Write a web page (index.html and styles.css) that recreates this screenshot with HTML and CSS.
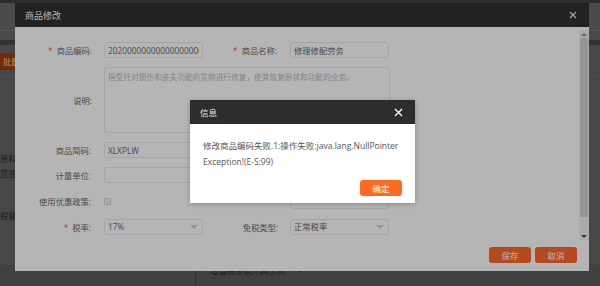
FILE: index.html
```html
<!DOCTYPE html>
<html lang="zh-CN">
<head>
    <meta charset="UTF-8">
    <meta name="viewport" content="width=device-width, initial-scale=1.0">
    <title>商品修改</title>
    <link rel="stylesheet" href="styles.css">
</head>
<body>
    <!-- page behind the layers -->
    <div class="page">
        <div class="page-top"></div>
        <div class="page-nav"></div>
        <div class="page-subnav"></div>
        <div class="page-band"></div>
        <div class="page-toolbar">
            <span class="page-btn">证书 批量导入</span>
        </div>
        <div class="page-body">
            <div class="page-label first"><span>生产原料：</span></div>
            <div class="page-label"><span>经营范围：</span></div>
            <div class="page-label third"><span>凭证税额：</span></div>
            <div class="page-row">
                <div class="page-cell"></div>
                <div class="page-cell text">增值税发票开具示例</div>
                <div class="page-cell mark">-</div>
            </div>
        </div>
    </div>

    <div class="modal">
        <div class="modal-head">
            <span class="modal-title">商品修改</span>
            <svg class="modal-close" width="8" height="8" viewBox="0 0 8 8">
                <path d="M1 1L7 7M7 1L1 7" stroke="#e6e6e6" stroke-width="1.3"/>
            </svg>
        </div>
        <div class="modal-main">
            <form class="goods-form">
                <label class="lbl"><i>*</i>商品编码:</label>
                <input class="field" type="text" value="20200000000000000000">
                <label class="lbl"><i>*</i>商品名称:</label>
                <input class="field" type="text" value="修理修配劳务">

                <label class="lbl">说明:</label>
                <textarea class="field area" placeholder="指受托对损伤和丧失功能的货物进行修复，使其恢复原状和功能的业务。"></textarea>

                <label class="lbl">商品简码:</label>
                <input class="field" type="text" value="XLXPLW">
                <label class="lbl">规格型号:</label>
                <input class="field" type="text">

                <label class="lbl">计量单位:</label>
                <input class="field" type="text">
                <label class="lbl">单价:</label>
                <input class="field" type="text">

                <label class="lbl">使用优惠政策:</label>
                <span class="check"></span>
                <label class="lbl"></label>
                <input class="field" type="text">

                <label class="lbl"><i>*</i>税率:</label>
                <div class="field select">17%</div>
                <label class="lbl">免税类型:</label>
                <div class="field select">正常税率</div>
            </form>
            <div class="scrollbar">
                <div class="arrow up"></div>
                <div class="thumb"></div>
                <div class="track-rest"></div>
                <div class="arrow down"></div>
            </div>
        </div>
        <div class="modal-foot">
            <button class="btn">保存</button>
            <button class="btn">取消</button>
        </div>
    </div>

    <div class="shade"></div>

    <div class="dialog">
        <div class="dialog-head">
            <span class="dialog-title">信息</span>
            <svg class="dialog-close" width="9" height="9" viewBox="0 0 9 9">
                <path d="M1 1L8 8M8 1L1 8" stroke="#ffffff" stroke-width="1.3"/>
            </svg>
        </div>
        <div class="dialog-body">修改商品编码失败.1:操作失败:java.lang.NullPointer<br>Exception!(E-S:99)</div>
        <div class="dialog-foot">
            <button class="dialog-btn">确定</button>
        </div>
    </div>
</body>
</html>
```

FILE: styles.css
```css
body {
    margin: 0;
    width: 600px;
    height: 286px;
    overflow: hidden;
    position: relative;
    font-family: "Open Sans", "Noto Sans CJK SC", sans-serif;
    font-size: 8.3px;
    background-color: #646464;
}

/* page behind */
.page-top {
    height: 3px;
    background: #3e3e3e;
}
.page-nav {
    height: 27px;
    background: #6a6a6a;
    border-bottom: 1px solid #787878;
}
.page-subnav {
    height: 9px;
    background: #676767;
}
.page-band {
    height: 5px;
    background: #484848;
}
.page-toolbar {
    height: 31px;
    background: #646464;
    border-bottom: 1px solid #717171;
    padding-top: 8px;
    box-sizing: border-box;
    display: flex;
}
.page-btn {
    height: 17px;
    line-height: 17px;
    margin-left: -16px;
    padding: 0 8px 0 0;
    background: #a23c08;
    color: #f3c7a8;
    white-space: nowrap;
}
.page-body {
    background: #646464;
}
.page-label {
    width: 25px;
    height: 15px;
    line-height: 15px;
    display: flex;
    justify-content: flex-end;
    white-space: nowrap;
    color: #2a2a2a;
}
.page-label.first {
    margin-top: 75px;
}
.page-label.third {
    margin-top: 27px;
}
.page-row {
    margin-top: 42px;
    height: 22px;
    display: flex;
    background: #5c5c5c;
}
.page-cell {
    line-height: 12px;
    color: #2a2a2a;
    white-space: nowrap;
}
.page-cell:first-child {
    width: 195px;
    border-right: 1px solid #484848;
}
.page-cell.text {
    padding-left: 14px;
}
.page-cell.mark {
    padding-left: 14px;
}

/* edit window */
.modal {
    position: absolute;
    left: 15px;
    top: 3px;
    width: 574px;
    height: 268px;
    background: #fff;
    display: flex;
    flex-direction: column;
}
.modal-head {
    height: 24px;
    background: #303030;
    display: flex;
    align-items: center;
    justify-content: space-between;
    padding: 0 12px 0 10px;
}
.modal-title {
    color: #fff;
    font-size: 9px;
}
.modal-main {
    height: 213px;
    display: flex;
}
.goods-form {
    flex: 1;
    display: grid;
    grid-template-columns: 89px 99px 87px 99px;
    grid-template-rows: 16px 66px 16px 16px 18px 16px;
    row-gap: 9px;
    align-items: center;
    align-content: start;
    padding-top: 15px;
    margin: 0;
}
.lbl {
    text-align: right;
    padding-right: 12px;
    color: #6a6a6a;
    white-space: nowrap;
}
.lbl:nth-child(4n+3) {
    padding-right: 13px;
}
.lbl i {
    font-style: normal;
    color: #ff5722;
    margin-right: 4px;
}
.field {
    box-sizing: border-box;
    height: 16px;
    width: 99px;
    margin: 0;
    padding: 0 3px;
    border: 1px solid #e9e9e9;
    border-radius: 3px;
    background: #fff;
    font-family: inherit;
    font-size: 8.3px;
    color: #666;
    outline: none;
}
.field.area {
    grid-column: 2 / 5;
    width: 286px;
    height: 66px;
    resize: none;
    padding: 3px 3px;
    line-height: 12px;
    font-size: 7.7px;
}
.area::placeholder {
    color: #bbb;
}
.select {
    position: relative;
    line-height: 14px;
}
.select::after {
    content: "";
    position: absolute;
    right: 4px;
    top: 5px;
    border-left: 4px solid transparent;
    border-right: 4px solid transparent;
    border-top: 4px solid #cfcfcf;
}
.check {
    width: 7px;
    height: 7px;
    border: 1px solid #d6d6d6;
    border-radius: 1px;
    background: #f2f2f2;
    box-sizing: border-box;
}

.scrollbar {
    width: 10px;
    height: 210px;
    margin-top: 3px;
    background: #f1f1f1;
    display: flex;
    flex-direction: column;
    align-items: center;
}
.arrow {
    height: 8px;
    width: 10px;
    display: flex;
    align-items: center;
    justify-content: center;
}
.arrow::before {
    content: "";
    border-left: 3px solid transparent;
    border-right: 3px solid transparent;
}
.arrow.up::before {
    border-bottom: 3px solid #8a8a8a;
}
.arrow.down::before {
    border-top: 3px solid #505050;
}
.thumb {
    width: 8px;
    height: 179px;
    background: #d2d2d2;
}
.track-rest {
    flex: 1;
}

.modal-foot {
    flex: 1;
    display: flex;
    justify-content: flex-end;
    align-items: flex-start;
    gap: 4px;
    padding: 7px 12px 0 0;
}
.btn {
    width: 42px;
    height: 16px;
    padding: 0;
    border: none;
    border-radius: 3px;
    background: #ff6a2a;
    color: #fff;
    font-family: inherit;
    font-size: 8.5px;
}

.shade {
    position: absolute;
    inset: 0;
    background: rgba(0, 0, 0, 0.29);
}

/* message box */
.dialog {
    position: absolute;
    left: 190px;
    top: 100px;
    width: 225px;
    background: #fff;
    box-shadow: 0 1px 5px rgba(0, 0, 0, 0.25);
}
.dialog-head {
    height: 24px;
    background: #2d2d2d;
    display: flex;
    align-items: center;
    justify-content: space-between;
    padding: 0 12px 0 10px;
}
.dialog-title {
    color: #e8e8e8;
    font-size: 8.5px;
}
.dialog-body {
    padding: 14px 13px 0;
    line-height: 16px;
    font-size: 8.5px;
    color: #555;
}
.dialog-foot {
    display: flex;
    justify-content: flex-end;
    padding: 10px 13px 7px;
}
.dialog-btn {
    width: 42px;
    height: 16px;
    padding: 0;
    border: none;
    border-radius: 3px;
    background: #ff6a21;
    color: #fff;
    font-family: inherit;
    font-size: 8.5px;
}
```
